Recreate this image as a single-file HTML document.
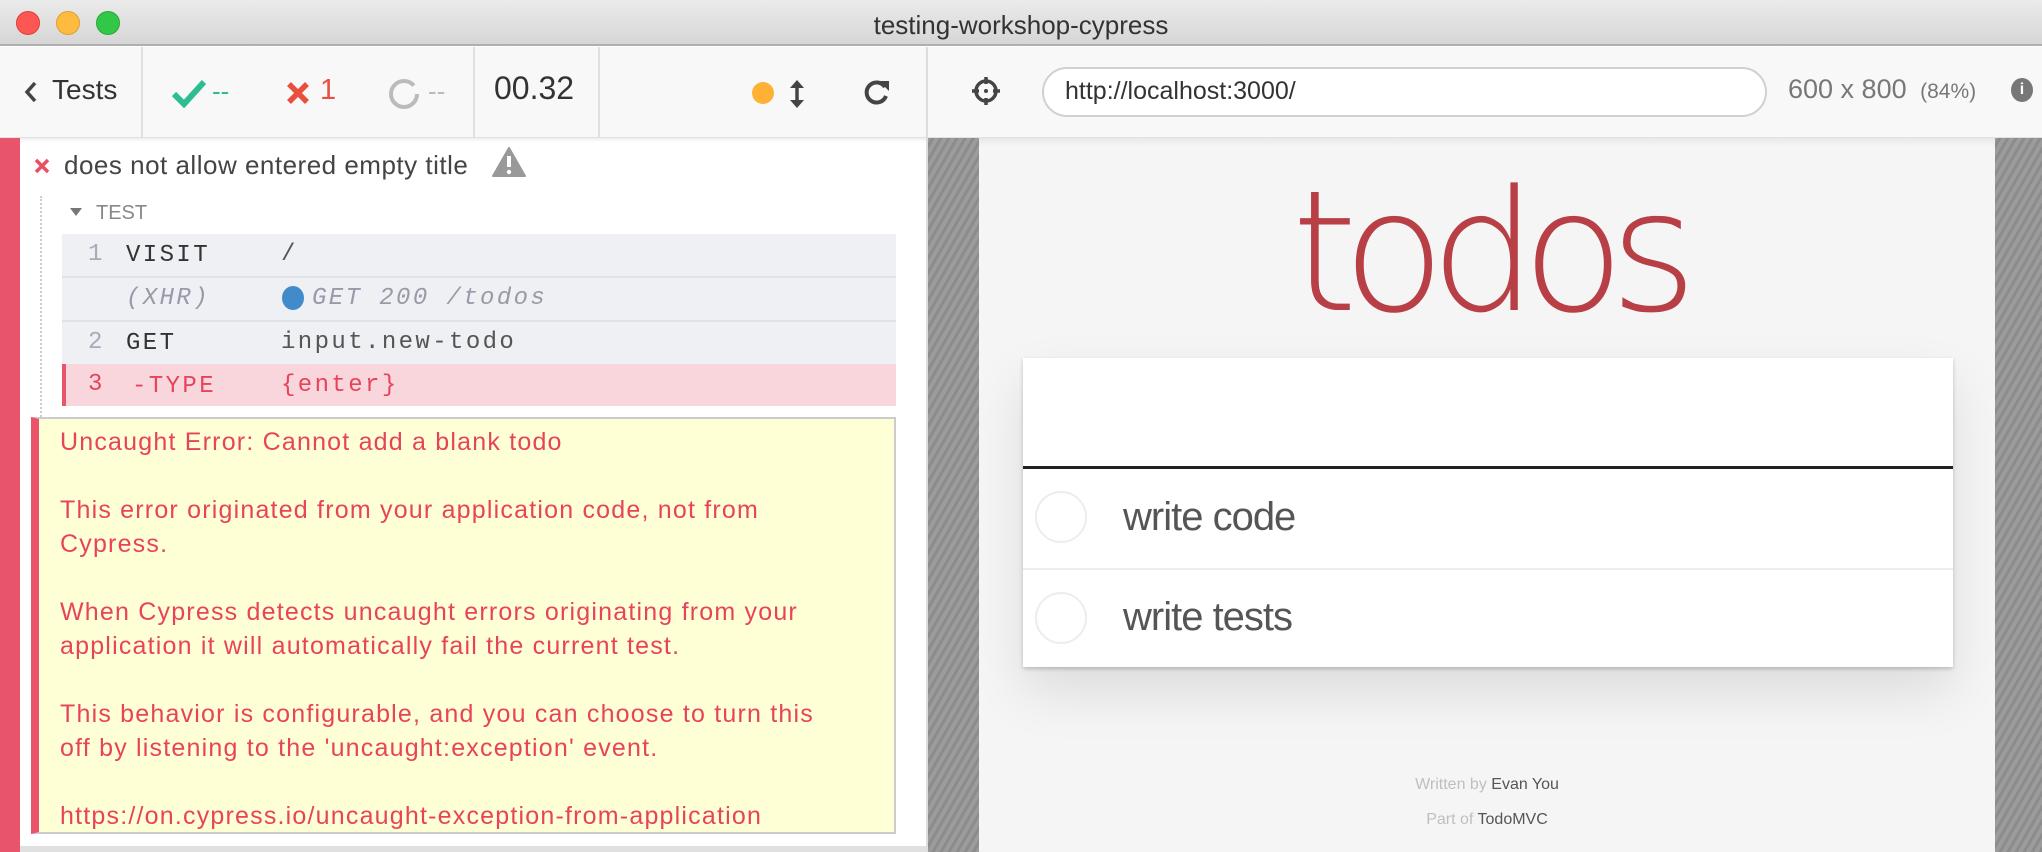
<!DOCTYPE html>
<html><head><meta charset="utf-8"><style>
*{margin:0;padding:0;box-sizing:border-box}
body{width:2042px;height:852px;overflow:hidden;background:#fff;font-family:"Liberation Sans",sans-serif;position:relative}
.a{position:absolute;white-space:nowrap}
.mono{font-family:"Liberation Mono",monospace;font-size:24px;letter-spacing:2.4px}
</style></head><body>
<!-- title bar -->
<div class="a" style="left:0;top:0;width:2042px;height:46px;background:linear-gradient(#ebebeb,#d6d6d6);border-bottom:2px solid #b0b0b0"></div>
<div class="a" style="left:16px;top:11px;width:24px;height:24px;border-radius:50%;background:#fc5753;border:1px solid #df3e3a"></div>
<div class="a" style="left:56px;top:11px;width:24px;height:24px;border-radius:50%;background:#fdbc40;border:1px solid #de9f2a"></div>
<div class="a" style="left:96px;top:11px;width:24px;height:24px;border-radius:50%;background:#33c748;border:1px solid #27a83a"></div>
<div class="a" style="left:0;width:2042px;top:10px;text-align:center;font-size:26px;color:#333">testing-workshop-cypress</div>
<!-- toolbar -->
<div class="a" style="left:0;top:47px;width:2042px;height:91px;background:#f8f8f8;border-bottom:1px solid #e2e2e2;box-shadow:0 2px 3px rgba(0,0,0,.08)"></div>
<div class="a" style="left:141px;top:47px;width:2px;height:91px;background:#e0e0e0"></div>
<div class="a" style="left:473px;top:47px;width:2px;height:91px;background:#e0e0e0"></div>
<div class="a" style="left:598px;top:47px;width:2px;height:91px;background:#e0e0e0"></div>
<div class="a" style="left:926px;top:47px;width:2px;height:805px;background:#ddd"></div>
<svg class="a" style="left:24px;top:80px" width="14" height="24" viewBox="0 0 14 24"><path d="M11 3 L3 12 L11 21" stroke="#444" stroke-width="3.5" fill="none"/></svg>
<div class="a" style="left:52px;top:74px;font-size:28px;color:#333">Tests</div>
<svg class="a" style="left:172px;top:80px" width="34" height="28" viewBox="0 0 34 28"><path d="M2 14 L12 24 L32 2" stroke="#2ebd93" stroke-width="6" fill="none"/></svg>
<div class="a" style="left:212px;top:76px;font-size:26px;color:#2ebd93">--</div>
<svg class="a" style="left:286px;top:81px" width="24" height="24" viewBox="0 0 24 24"><path d="M3 3 L21 21 M21 3 L3 21" stroke="#e94f3f" stroke-width="5.5"/></svg>
<div class="a" style="left:320px;top:74px;font-size:29px;color:#e94f3f">1</div>
<svg class="a" style="left:388px;top:78px" width="32" height="32" viewBox="0 0 32 32"><circle cx="16" cy="16" r="13" stroke="#bbb" stroke-width="4" fill="none" stroke-dasharray="72 10"/></svg>
<div class="a" style="left:428px;top:76px;font-size:26px;color:#bbb">--</div>
<div class="a" style="left:494px;top:70px;font-size:32px;color:#333">00.32</div>
<div class="a" style="left:752px;top:82px;width:22px;height:22px;border-radius:50%;background:#ffb134"></div>
<svg class="a" style="left:788px;top:78px" width="18" height="32" viewBox="0 0 18 32"><path d="M9 4 V28" stroke="#444" stroke-width="3.5"/><path d="M2 10 L9 2 L16 10Z M2 22 L9 30 L16 22Z" fill="#444"/></svg>
<svg class="a" style="left:862px;top:77px" width="30" height="30" viewBox="0 0 30 30"><path d="M23 10 A10 10 0 1 0 24 19" stroke="#444" stroke-width="4" fill="none"/><path d="M17 4 L27 4 L27 14Z" fill="#444"/></svg>
<svg class="a" style="left:970px;top:75px" width="32" height="32" viewBox="0 0 32 32"><circle cx="16" cy="16" r="10" stroke="#444" stroke-width="3.5" fill="none"/><path d="M16 2 V9 M16 23 V30 M2 16 H9 M23 16 H30" stroke="#444" stroke-width="3.5"/><circle cx="16" cy="16" r="2" fill="#444"/></svg>
<div class="a" style="left:1042px;top:67px;width:725px;height:50px;border-radius:25px;background:#fff;border:2px solid #d0d0d0"></div>
<div class="a" style="left:1065px;top:77px;font-size:25px;color:#333">http://localhost:3000/</div>
<div class="a" style="left:1788px;top:74px;font-size:27px;color:#777">600 x 800 <span style="font-size:21px;margin-left:6px">(84%)</span></div>
<div class="a" style="left:2011px;top:78px;width:22px;height:24px;border-radius:50%;background:#777;color:#fff;font-size:16px;font-weight:bold;text-align:center;line-height:24px">i</div>
<!-- reporter -->
<div class="a" style="left:0;top:138px;width:20px;height:714px;background:#e8546a"></div>
<div class="a" style="left:20px;top:846px;width:906px;height:6px;background:#e0e0e0"></div>
<svg class="a" style="left:34px;top:158px" width="16" height="16" viewBox="0 0 16 16"><path d="M2 2 L14 14 M14 2 L2 14" stroke="#e94f5f" stroke-width="3.5"/></svg>
<div class="a" style="left:64px;top:150px;font-size:26px;letter-spacing:0.5px;color:#444">does not allow entered empty title</div>
<svg class="a" style="left:492px;top:147px" width="34" height="30" viewBox="0 0 34 30"><path d="M17 1 L33 29 H1Z" fill="#999" stroke="#999" stroke-width="2" stroke-linejoin="round"/><path d="M17 9 V20" stroke="#fff" stroke-width="4"/><circle cx="17" cy="25" r="2.2" fill="#fff"/></svg>
<div class="a" style="left:40px;top:196px;height:620px;border-left:2px dotted #ccc"></div>
<svg class="a" style="left:69px;top:207px" width="14" height="10" viewBox="0 0 14 10"><path d="M1 1 H13 L7 9Z" fill="#777"/></svg>
<div class="a" style="left:96px;top:202px;font-size:20px;color:#888">TEST</div>
<div class="a" style="left:62px;top:234px;width:834px;height:172px;background:#eef0f3"></div>
<div class="a" style="left:62px;top:276px;width:834px;height:2px;background:#dfe2e6"></div>
<div class="a" style="left:62px;top:320px;width:834px;height:2px;background:#dfe2e6"></div>
<div class="a" style="left:62px;top:364px;width:834px;height:42px;background:#f9d6dc;border-left:4px solid #e8546a"></div>
<div class="a mono" style="left:88px;top:241px;color:#aab">1</div>
<div class="a mono" style="left:126px;top:242px;color:#333">VISIT</div>
<div class="a mono" style="left:281px;top:241px;color:#555">/</div>
<div class="a mono" style="left:126px;top:285px;color:#99a;font-style:italic">(XHR)</div>
<div class="a" style="left:282px;top:286px;width:22px;height:24px;border-radius:50%;background:#428bca"></div>
<div class="a mono" style="left:312px;top:285px;color:#99a;font-style:italic">GET 200 /todos</div>
<div class="a mono" style="left:88px;top:329px;color:#aab">2</div>
<div class="a mono" style="left:126px;top:330px;color:#333">GET</div>
<div class="a mono" style="left:281px;top:329px;color:#555">input.new-todo</div>
<div class="a mono" style="left:88px;top:371px;color:#e8435c">3</div>
<div class="a mono" style="left:132px;top:373px;color:#e8435c">-TYPE</div>
<div class="a mono" style="left:281px;top:372px;color:#e8435c">{enter}</div>
<div class="a" style="left:31px;top:417px;width:865px;height:417px;background:#ffffd6;border:2px solid #ccc;border-left:8px solid #e8546a"></div>
<div class="a" style="left:60px;top:425px;font-size:25px;letter-spacing:1.2px;line-height:34px;color:#e8435c;white-space:pre">Uncaught Error: Cannot add a blank todo

This error originated from your application code, not from
Cypress.

When Cypress detects uncaught errors originating from your
application it will automatically fail the current test.

This behavior is configurable, and you can choose to turn this
off by listening to the 'uncaught:exception' event.

https://on.cypress.io/uncaught-exception-from-application</div>
<!-- AUT -->
<div class="a" style="left:928px;top:138px;width:1114px;height:714px;background:repeating-linear-gradient(-60deg,#8c8c8c 0 3px,#9c9c9c 3px 7px)"></div>
<div class="a" style="left:979px;top:138px;width:1016px;height:714px;background:#f5f5f5"></div>
<div class="a" style="left:979px;top:138px;width:1016px;height:8px;background:linear-gradient(rgba(0,0,0,.06),transparent)"></div>
<div class="a" style="left:979px;top:160px;width:1016px;text-align:center;font-family:'DejaVu Sans',sans-serif;font-size:168px;font-weight:200;color:#b83f45;letter-spacing:-15px;line-height:1.1">todos</div>
<div class="a" style="left:1023px;top:358px;width:930px;height:309px;background:#fff;box-shadow:0 2px 4px rgba(0,0,0,.2),0 25px 50px rgba(0,0,0,.1)"></div>
<div class="a" style="left:1023px;top:466px;width:930px;height:3px;background:#222"></div>
<div class="a" style="left:1023px;top:568px;width:930px;height:2px;background:#ededed"></div>
<div class="a" style="left:1035px;top:491px;width:52px;height:52px;border-radius:50%;border:2px solid #ededed"></div>
<div class="a" style="left:1035px;top:592px;width:52px;height:52px;border-radius:50%;border:2px solid #ededed"></div>
<div class="a" style="left:1123px;top:495px;font-size:40px;font-weight:300;color:#555;letter-spacing:-1px">write code</div>
<div class="a" style="left:1123px;top:595px;font-size:40px;font-weight:300;color:#555;letter-spacing:-1px">write tests</div>
<div class="a" style="left:979px;width:1016px;top:776px;text-align:center;font-size:16px;color:#bfbfbf">Written by <span style="color:#555">Evan You</span></div>
<div class="a" style="left:979px;width:1016px;top:811px;text-align:center;font-size:16px;color:#bfbfbf">Part of <span style="color:#555">TodoMVC</span></div>
</body></html>
